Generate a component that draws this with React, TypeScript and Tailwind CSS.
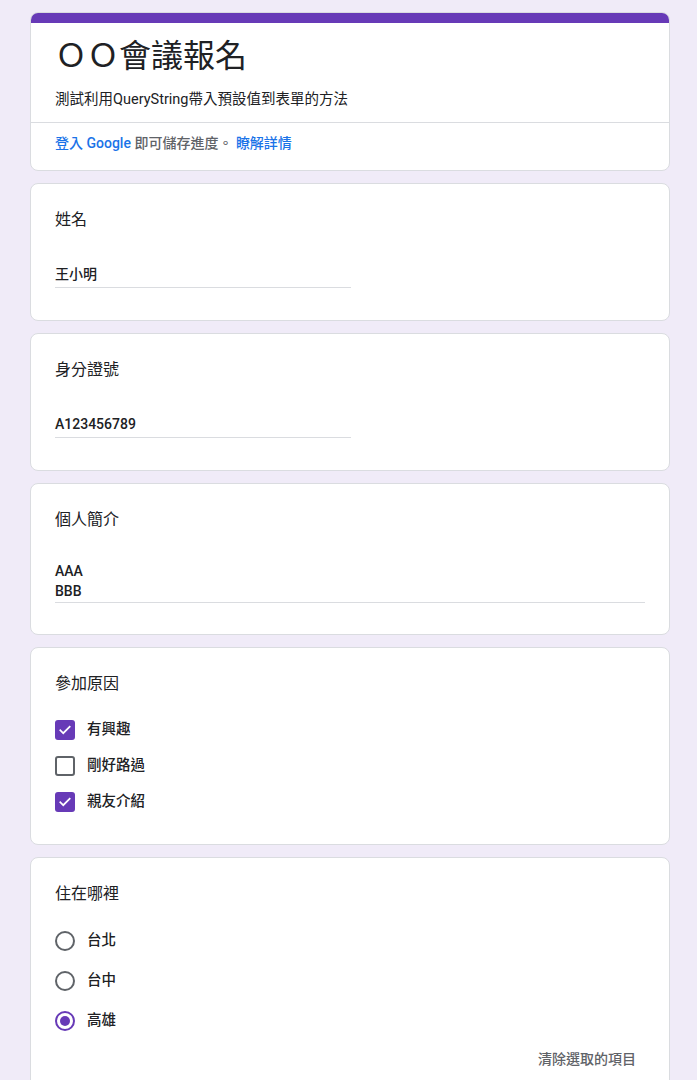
import React from "react";

const font = { fontFamily: 'Roboto, "Noto Sans CJK TC", "Noto Sans CJK SC", sans-serif' };

function Card({ children, className = "" }: { children: React.ReactNode; className?: string }) {
    return (
        <div className={`bg-white border border-[#dadce0] rounded-lg px-6 ${className}`}>
            {children}
        </div>
    );
}

function Label({ text }: { text: string }) {
    return <div className="text-[16px] leading-6 text-[#202124]">{text}</div>;
}

function Checkbox({ checked, label }: { checked: boolean; label: string }) {
    return (
        <div className="h-9 flex items-center gap-3">
            {checked ? (
                <div className="w-5 h-5 rounded-[3px] bg-[#673ab7] flex items-center justify-center">
                    <svg width="14" height="14" viewBox="0 0 24 24" fill="none" stroke="white" strokeWidth="3" strokeLinecap="square">
                        <path d="M4 12.5l5 5L20 6.5" />
                    </svg>
                </div>
            ) : (
                <div className="w-5 h-5 rounded-[3px] border-2 border-[#5f6368]" />
            )}
            <span className="text-[14.5px] font-medium text-[#202124]">{label}</span>
        </div>
    );
}

function Radio({ checked, label }: { checked: boolean; label: string }) {
    return (
        <div className="h-10 flex items-center gap-3">
            {checked ? (
                <div className="w-5 h-5 rounded-full border-2 border-[#673ab7] flex items-center justify-center">
                    <div className="w-[10px] h-[10px] rounded-full bg-[#673ab7]" />
                </div>
            ) : (
                <div className="w-5 h-5 rounded-full border-2 border-[#5f6368]" />
            )}
            <span className="text-[14.5px] font-medium text-[#202124]">{label}</span>
        </div>
    );
}

export default function App() {
    return (
        <div className="min-h-[1080px] bg-[#f0ebf8] pt-3 pb-10" style={font}>
            <div className="ml-[30px] w-[640px] flex flex-col gap-[12px]">
                <div className="bg-white border border-[#dadce0] rounded-lg overflow-hidden">
                    <div className="h-[10px] bg-[#673ab7]" />
                    <div className="px-6 pt-[13px] pb-3">
                        <div className="text-[32px] leading-10 text-[#202124]">ＯＯ會議報名</div>
                        <div className="mt-[14px] text-[14.5px] leading-5 text-[#202124]">
                            測試利用QueryString帶入預設值到表單的方法
                        </div>
                    </div>
                    <div className="border-t border-[#dadce0] px-6 pt-[10px] pb-[17px] text-[14px] leading-5">
                        <span className="text-[#1a73e8] font-medium">登入 Google</span>
                        <span className="text-[#5f6368] font-medium"> 即可儲存進度。 </span>
                        <span className="text-[#1a73e8] font-medium">瞭解詳情</span>
                    </div>
                </div>

                <Card className="pt-6 pb-[32px]">
                    <Label text="姓名" />
                    <div className="mt-8 w-[296px] border-b border-[#dadce0] pb-[3px] text-[14px] leading-5 font-medium text-[#202124]">
                        王小明
                    </div>
                </Card>

                <Card className="pt-6 pb-[32px]">
                    <Label text="身分證號" />
                    <div className="mt-8 w-[296px] border-b border-[#dadce0] pb-[3px] text-[14px] leading-5 font-medium text-[#202124]">
                        A123456789
                    </div>
                </Card>

                <Card className="pt-6 pb-[31px]">
                    <Label text="個人簡介" />
                    <div className="mt-[29px] border-b border-[#dadce0] pb-px text-[14px] leading-5 font-medium text-[#202124]">
                        <div>AAA</div>
                        <div>BBB</div>
                    </div>
                </Card>

                <Card className="pt-6 pb-6">
                    <Label text="參加原因" />
                    <div className="mt-4 flex flex-col">
                        <Checkbox checked label="有興趣" />
                        <Checkbox checked={false} label="剛好路過" />
                        <Checkbox checked label="親友介紹" />
                    </div>
                </Card>

                <Card className="pt-6 pb-6">
                    <Label text="住在哪裡" />
                    <div className="mt-[15px] flex flex-col">
                        <Radio checked={false} label="台北" />
                        <Radio checked={false} label="台中" />
                        <Radio checked label="高雄" />
                    </div>
                    <div className="mt-2 flex justify-end pr-[9px]">
                        <span className="text-[14px] leading-5 font-medium text-[#5f6368]">清除選取的項目</span>
                    </div>
                </Card>
            </div>
        </div>
    );
}
